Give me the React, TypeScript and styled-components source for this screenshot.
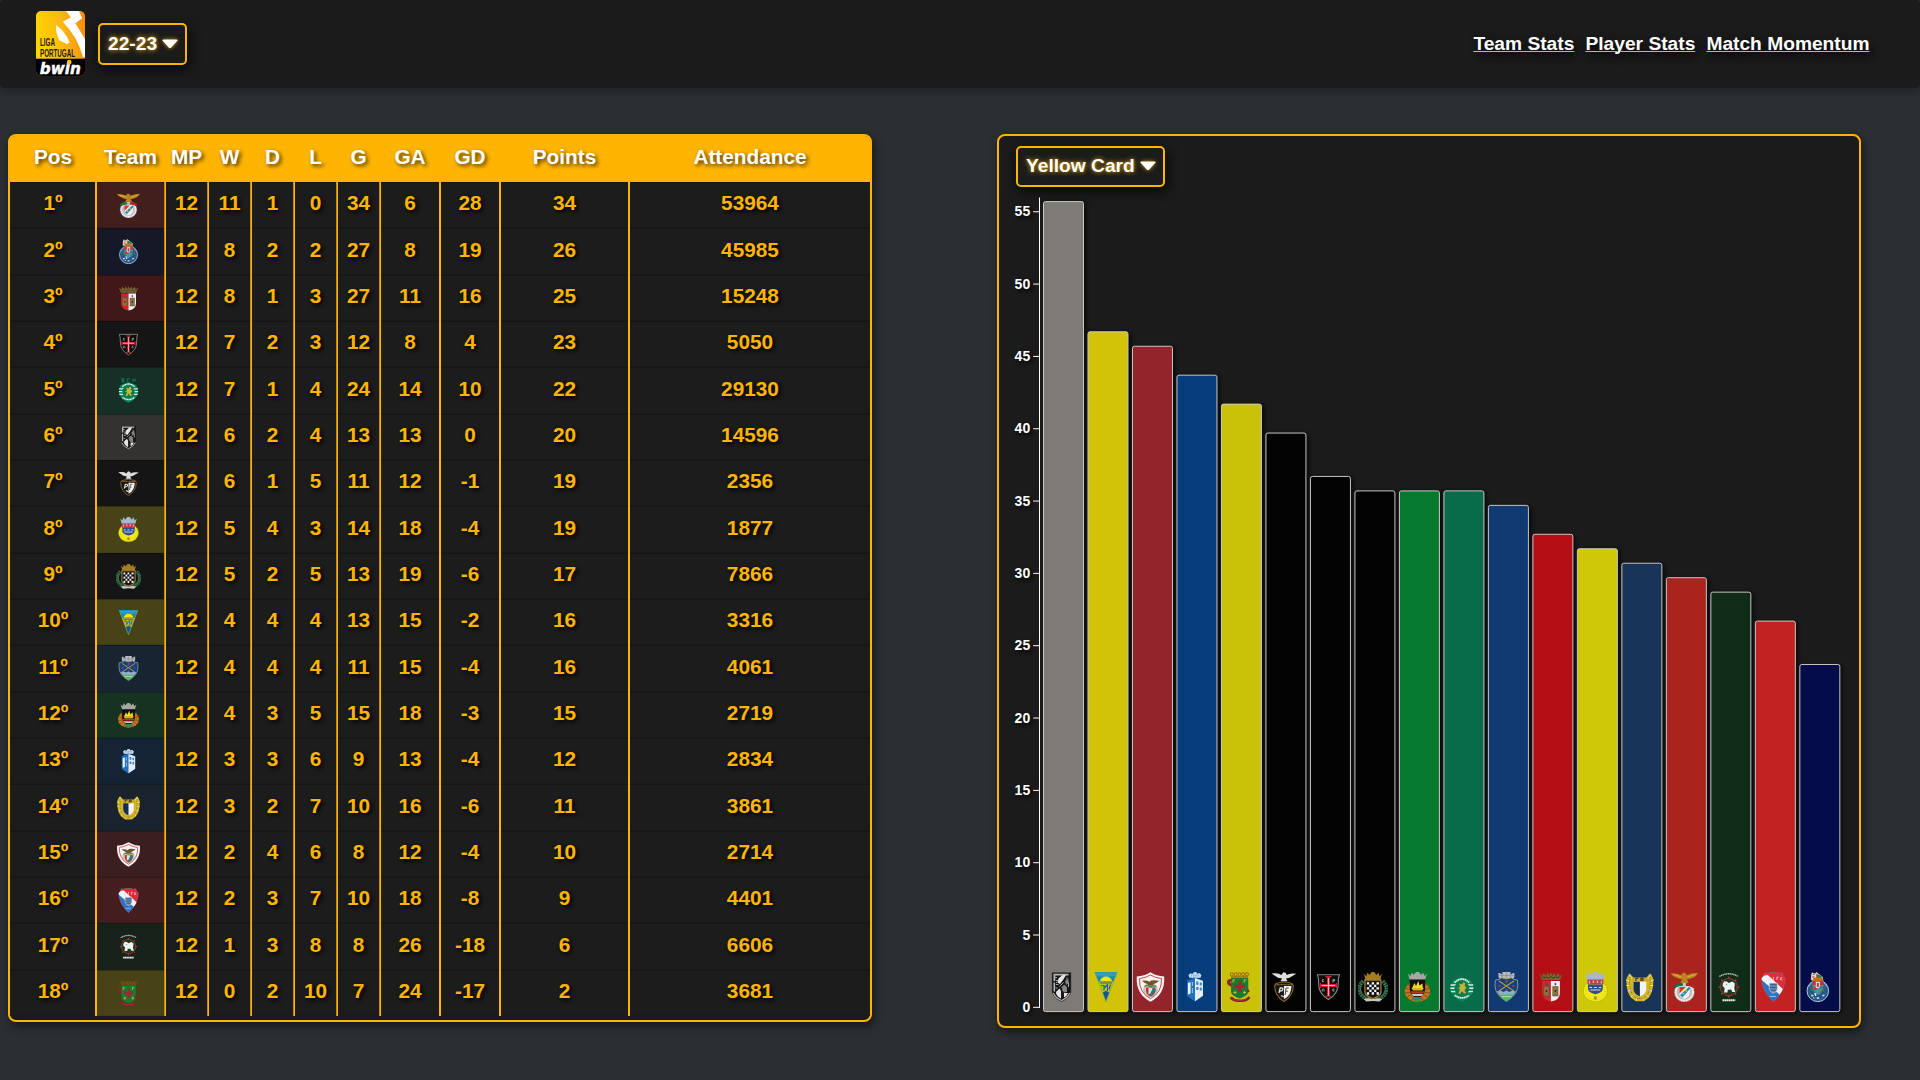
import React from "react";
import styled, { createGlobalStyle } from "styled-components";

const AMBER = "#ffb500";

const GlobalStyle = createGlobalStyle`
  *, *::before, *::after { box-sizing: border-box; }
  html, body { margin: 0; padding: 0; }
  body {
    min-height: 100vh;
    background: #2b2f32;
    font-family: "Liberation Sans", Arial, Helvetica, sans-serif;
    font-weight: 700;
    overflow: hidden;
  }
`;

const Header = styled.header`
  display: flex;
  align-items: center;
  height: 88px;
  padding: 0 50.5px 0 36px;
  background: #1b1b1b;
  border-radius: 4px;
  box-shadow: 0 2px 8px rgba(0, 0, 0, 0.3);
`;

const LogoBox = styled.div`
  width: 49px;
  height: 65px;
  margin: 0 13px 1px 0;
  svg { display: block; overflow: visible; }
`;

const Nav = styled.nav`
  display: flex;
  gap: 11.1px;
  margin-left: auto;
`;

const NavLink = styled.a`
  color: #fff;
  font-size: 19.2px;
  line-height: 22px;
  text-decoration: underline;
  text-decoration-color: ${AMBER};
  text-decoration-thickness: 1px;
  text-shadow: 2px 4px 8px #000;
  cursor: pointer;
`;

const SelectButton = styled.button<{ $height: number }>`
  display: inline-flex;
  align-items: center;
  gap: 5.3px;
  height: ${(p) => p.$height}px;
  padding: 0 7px 1px 8px;
  border: 2px solid ${AMBER};
  border-radius: 5px;
  background: #1b1b1b;
  color: #fff;
  font: 700 19.2px/22px "Liberation Sans", Arial, sans-serif;
  text-shadow: 0 0 5px ${AMBER};
  box-shadow: 2px 4px 12px rgba(0, 0, 0, 0.75);
  white-space: nowrap;
  svg { display: block; overflow: visible; filter: drop-shadow(0 0 2px rgba(255, 181, 0, 0.8)); }
`;

const Main = styled.main`
  display: flex;
  justify-content: space-between;
  align-items: flex-start;
  padding: 46px 59px 0 8px;
`;

const Panel = styled.section<{ $height: number }>`
  width: 864px;
  height: ${(p) => p.$height}px;
  border: 2px solid ${AMBER};
  border-radius: 8px;
  background: #1b1b1b;
  box-shadow: 2px 4px 10px rgba(0, 0, 0, 0.5);
  overflow: hidden;
`;

const Row = styled.div<{ $head?: boolean }>`
  display: grid;
  grid-template-columns: 87px 69px repeat(5, 43px) 60px 60px 129px 240px;
  height: ${(p) => (p.$head ? "46px" : "46.333px")};
  background: ${(p) => (p.$head ? AMBER : "#1c1c1c")};
`;

const Cell = styled.div<{ $tint?: string }>`
  display: flex;
  align-items: center;
  justify-content: center;
  padding-bottom: 3.6px;
  border-right: 2px solid ${AMBER};
  background: ${(p) => p.$tint || "#1c1c1c"};
  color: ${AMBER};
  font-size: 20.8px;
  line-height: 24px;
  text-shadow: 2px 2px 4px #000;
  box-shadow: inset 0 1px 0 rgba(0, 0, 0, 0.25), inset 0 -1px 0 rgba(0, 0, 0, 0.08);
  &:first-child { padding-left: 1px; }
  &:nth-child(n + 2):nth-child(-n + 7) {
    border-right-width: 1px;
    padding-right: 1px;
    box-shadow: inset -1px 0 0 #c08a0a, inset 0 1px 0 rgba(0, 0, 0, 0.25), inset 0 -1px 0 rgba(0, 0, 0, 0.08);
  }
  &:last-child { border-right: 0; }
`;

const HeadCell = styled(Cell)`
  padding-bottom: 4px;
  background: ${AMBER};
  color: #fff;
  text-shadow: 2px 2px 4px rgba(0, 0, 0, 0.75);
  &&, &&:nth-child(n + 2):nth-child(-n + 7) { box-shadow: none; }
`;

const TeamCell = styled(Cell)`
  &&:nth-child(2) { padding: 1px 5px 0 0; }
  svg { display: block; }
`;

const ChartHead = styled.div`
  display: flex;
  padding: 10px 0 0 17px;
  height: 56px;
`;

const ChartSvg = styled.svg`
  display: block;
  overflow: visible;
`;

const AxisLabel = styled.text`
  fill: #fff;
  font: 700 14px "Liberation Sans", Arial, sans-serif;
  text-anchor: end;
  text-shadow: 2px 2px 4px #000;
`;

const Bar = styled.rect`
  stroke: #c8c8c8;
  stroke-width: 1px;
  filter: drop-shadow(2px 1px 2px rgba(0, 0, 0, 0.7));
`;

/* ---------- crests, each drawn on a 30 x 30 grid ---------- */

const crown = (color: string, x: number, y: number, w: number, h: number) => (
  <path
    d={`M${x} ${y + h * 0.2} l${w * 0.13} ${h * 0.3} l${w * 0.07} ${-h * 0.45} l${w * 0.1} ${h * 0.3} l${w * 0.13} ${-h * 0.35} h${w * 0.14} l${w * 0.13} ${h * 0.35} l${w * 0.1} ${-h * 0.3} l${w * 0.07} ${h * 0.45} l${w * 0.13} ${-h * 0.3} l${-w * 0.1} ${h * 0.8} h${-w * 0.8} z`}
    fill={color}
  />
);

const crests: Record<string, React.ReactNode> = {
  benfica: (
    <>
      <circle cx="15" cy="20" r="10" fill="#bdbab8" stroke="#8d8a88" strokeWidth=".5" />
      <circle cx="15" cy="20" r="8.6" fill="none" stroke="#efefef" strokeWidth="2" strokeDasharray="2 .5" />
      <path d="M4.5 13.6 Q9 9.5 14 11.5 L13 14 Q9.5 13.6 6 16Z" fill="#1e6b41" />
      <path d="M25.5 13.6 Q21 9.5 16 11.5 L17 14 Q20.5 13.6 24 16Z" fill="#b32020" />
      <path d="M9.6 14.5 H20.6 V20 Q20 25.5 15.1 27 Q10.2 25.5 9.6 20Z" fill="#f1eeea" />
      <path d="M10 15 H16.5 L10 21.5Z" fill="#d5372b" />
      <path d="M20 14.5 l1 2 L13 25.4 l-2.3-2.4Z" fill="#1c8fc0" />
      <path d="M15.6 17.6 l2 1.8 M13 21 l1.5 1.3" stroke="#e5be2e" strokeWidth="1.3" />
      <path d="M1 1.2 Q7 .8 12 3 L14 .5 L16.5 1.6 L17.2 3.2 Q23 .6 29 1.2 Q26 5.2 21.5 6.6 L17.5 7.4 L18.9 9.6 L14.8 11.4 L11.5 9.5 L12.7 7.4 Q5 6.2 1 1.2Z" fill="#bb8420" />
      <path d="M4 2.5 L12 5 M26 2.5 L18 5" stroke="#edb846" strokeWidth=".8" />
    </>
  ),
  porto: (
    <>
      <circle cx="15" cy="18.8" r="10.8" fill="#245589" stroke="#b9c6d4" strokeWidth="1" />
      <circle cx="15" cy="18.8" r="8" fill="none" stroke="#416d9d" strokeWidth=".7" />
      <path d="M5.5 15 l3-4 M24.5 15 l-3-4" stroke="#7fa4c5" strokeWidth="1.2" />
      <path d="M9.5 8 h11 v9 q0 4-5.5 6 q-5.5-2-5.5-6z" fill="#568bb1" />
      <path d="M9.7 9 h3.3 v4 h-3.3z M17 9 h3.3 v4 H17z M11 15 h3 v3 h-3z" fill="#cc2f37" />
      <path d="M13 10 h4 v6 h-4z" fill="#e9ded9" />
      <path d="M14 11 h2 v4 h-2z" fill="#bb3740" />
      <path d="M16.5 15.5 h4 v2.5 l-3 3 M9.5 14v4 l3 3" fill="none" stroke="#37784a" strokeWidth="1.7" />
      <path d="M8 7.5 Q8 3 9 .6 L12.5 1.6 L13.5 0 L16 2 L20 5 V8.2 H9Z" fill="#e2d8c9" />
      <path d="M10 6.4 L14 5 L20.5 6.8 V9 H11Z" fill="#b97124" />
      <path d="M13.5 1.8 l5 2.2 1 2-6-.5z" fill="#3a7143" />
      <path d="M10 2.3 h2 M9.2 5h2.3" stroke="#bd2c34" />
      <path d="M8.4 23.5 h2.2 M10.5 25.8 h1 M14 26 h2.2 M19.5 23.5 h2 M12 21l1 3" stroke="#e1e8f0" strokeWidth="1.3" />
    </>
  ),
  braga: (
    <>
      <path d="M3.5 2 l3 2 1-3 3 3 1.2-4 1.8 4 L15 0l1.5 4 L18.3.5l1.5 3.5 2.8-3 1 3 3-2-2.5 6 H6z" fill="#756633" />
      <path d="M5 3.5 l3 2.4 2-1 2.5 1.2 2.5-1.5 2.5 1.5 2-1.2 2.5 1L25 3.5" stroke="#3c311f" fill="none" strokeWidth=".8" />
      <path d="M6.2 9 H15.2 V29.5 Q6.2 28 6.2 21Z" fill="#d1262c" />
      <path d="M15 9 h9 v12 q0 7-9 8.5z" fill="#efefef" />
      <path d="M7.8 14.5 h5.4 v9.5 H7.8z M16.8 14.5 h5.4 v9.5 h-5.4z" fill="#8a733e" stroke="#574b2c" strokeWidth=".5" />
      <path d="M9.8 18h1.5v2H9.8z M18.8 18h1.5v2h-1.5z" fill="#362e20" />
      <path d="M9.3 12 l1.3-1.2 1.3 1.2-1.3 1.5z M18.2 12l1.3-1.2 1.3 1.2-1.3 1.5z" fill="#3947a3" />
    </>
  ),
  casapia: (
    <>
      <path d="M4 2.8 H26 Q24.5 6.5 24.8 12 Q25 21.5 15 27.5 Q5 21.5 5.2 12 Q5.5 6.5 4 2.8Z" fill="#0b0b0b" stroke="#868686" strokeWidth="1.1" />
      <path d="M13.6 5 h2.8 v7 h6.3 v2.9 h-6.3 v9.3 h-2.8 v-9.3 H7.3 V12 h6.3z" fill="#d9202f" />
      <path d="M15 6 V24 M8.5 13.5 H21.5" stroke="#efc9c8" strokeWidth=".9" />
      <path d="M12 4.6h6 M12 24.3h6 M7 11v5 M23 11v5" stroke="#d9202f" strokeWidth="1.1" />
      <path d="M10.6 7.7 h-1.6 v2 h1.6 M19.5 10.5V7.5h1.7v1.4h-1.5 M8.8 19.5v-2l.9-.8.9.8v2 M21 17h-1.6v2H21" stroke="#bdbdbd" fill="none" strokeWidth=".8" />
    </>
  ),
  sporting: (
    <>
      <path d="M10 1 H7 V2.8 H9.6 V4.6 H6.8 M16.5 1 h-3 v3.6 h3 M20.3 5 V1.2 h2.8 v2 h-2.6" stroke="#08714d" strokeWidth="1.3" fill="none" />
      <path d="M4.2 12 Q5 7 10 6.8 L15 5.4 L20 6.8 Q25 7 25.8 12 L26.2 19 Q23.5 27 15 30 Q6.5 27 3.8 19Z" fill="#098255" />
      <path d="M3.6 13 H26.4 M3.4 16.3 H26.6 M4 19.6 H26" stroke="#d9efe4" strokeWidth="1.5" />
      <circle cx="15" cy="16.5" r="7.4" fill="#0a7950" />
      <path d="M7.6 10.6 Q15 3.6 22.4 10.6" fill="none" stroke="#d9efe4" strokeWidth="1.7" strokeDasharray="1.6 .3" />
      <path d="M7.8 23.2 Q15 28.6 22.2 23.2" fill="none" stroke="#d9efe4" strokeWidth="1.7" strokeDasharray="1.6 .3" />
      <path d="M12 11.5 l3 1 1.3-2 2.1.6-.7 2.8 1.8 1.7-2 3 2 2.4-2.4.5-2-2.5-2 3-1.7-.5 2-5-2.7.4 2.6-2.5z" fill="#c6b33a" />
    </>
  ),
  guimaraes: (
    <>
      <path d="M5.5 .5 H24.5 V20 Q23 26 15 29.7 Q7 26 5.5 20Z" fill="#171717" stroke="#4a4a4a" strokeWidth=".5" />
      <path d="M7 1.8 h15 v1.6 H8.8 V9 H7z M7 10.5 h1.6 v9 H7z" fill="#b5b5b5" />
      <path d="M12 6.5 L16 3 H19.5 L16.5 8 L13.5 12 L11 10.5Z" fill="#e6e6e6" />
      <path d="M10 19.5 L13 16.5 L14.5 19 V26.6 Q9.6 24 9.4 20z M17.5 21 h4 q-1 3-4 4.6z" fill="#e4e4e4" />
      <path d="M8 5.5h2.5 M9.5 8.5h2 M9.5 12.5h2.5 M9 16h2 M20.5 5.5v3 M22 10v5 M13 14.5l4-4 M15 16l3-3 M9.5 10.5h1" stroke="#a5a5a5" strokeWidth="1" />
      <path d="M18.5 9 L22 7 V11 L19.5 13Z M16 14.5l2.5-1.5 2 2.5v4.5l-3 .5-2-2.5z" fill="#858585" />
      <path d="M6.8 21 Q9 26 15 28.5 Q21 26 23.2 21" fill="none" stroke="#b8b8b8" strokeWidth="1.1" />
    </>
  ),
  portimonense: (
    <>
      <path d="M7 11.5 Q15 8.5 23 11.5 L24.4 14 Q24 24 15 29.5 Q6 24 5.6 14Z" fill="#191713" stroke="#8b662b" strokeWidth="1.1" />
      <path d="M6.5 12.6h17" stroke="#8b672d" strokeWidth="1.4" strokeDasharray="1 .4" />
      <path d="M15 14 h7.5 q0 9.5-7.5 13.3z" fill="#f2f2f2" />
      <path d="M10 21 l1.2-5 q3-.6 2.6 1.6 q-.4 1.8-3 1.6 M12 23.5 l3 1.5" fill="none" stroke="#e6e6e6" strokeWidth="1.3" />
      <path d="M19.6 16h-2.4l-1 6.8 M16.8 19.2h2" fill="none" stroke="#191919" strokeWidth=".8" />
      <path d="M2.6 1.6 Q10 .6 12.3 3 L14.5 .2 L17 1.1 L17.7 3 Q21 .6 27.4 1.8 L20 6 L17 6.5 L18.6 9.2 H11.5 L13.2 6.5 L9 5.8Z" fill="#dedede" />
    </>
  ),
  arouca: (
    <>
      <ellipse cx="15" cy="19" rx="12" ry="10.7" fill="#f3e813" stroke="#a9a52a" strokeWidth=".8" strokeDasharray="1.4 .9" />
      <ellipse cx="15" cy="19" rx="9.4" ry="8.8" fill="none" stroke="#b9bc20" strokeWidth=".9" strokeDasharray=".7 1.6" />
      {crown("#a5b8d2", 5, 0, 20, 8.4)}
      <path d="M7 7.6 h16 v5 H7z" fill="#b9404e" />
      <path d="M7.6 12.4 h14.8 v4.4 q0 4-7.4 5.4 q-7.4-1.4-7.4-5.4z" fill="#2d4d97" />
      <path d="M9 9 v2.4 M13 8.5v2.4 M17 8.5v2.4 M21 9v2.4" stroke="#e8b9a2" strokeWidth="1.2" />
      <path d="M9 15.5 h2.6 M13.6 15.5h2.8 M18.4 15.5h2.6 M10 18h10" stroke="#d3dbe6" strokeWidth="1.1" />
      <path d="M13.6 24.5 h2.8 v3 h-2.8z" fill="#a09320" />
    </>
  ),
  boavista: (
    <>
      <path d="M5.2 9 Q-1.5 16 3.5 23 Q7 27 12 27.5 M24.8 9 Q31.5 16 26.5 23 Q23 27 18 27.5" fill="none" stroke="#2f6a49" strokeWidth="4" strokeDasharray="2 .5" />
      <path d="M3.4 12 Q.5 20 7.5 25 M26.6 12 Q29.5 20 22.5 25" fill="none" stroke="#86ad8e" strokeWidth=".8" strokeDasharray="1 1.3" />
      {crown("#a57c24", 6, 0, 18, 8.6)}
      <path d="M7 8 H23 V20.5 Q22 24.5 15 26.5 Q8 24.5 7 20.5Z" fill="#171717" stroke="#a37d2a" strokeWidth="1.3" />
      {[0, 1, 2, 3, 4].map((r) =>
        [0, 1, 2, 3, 4].map((c) => (
          <rect key={`${r}-${c}`} x={9 + c * 2.4} y={10.2 + r * 2.5} width="2.4" height="2.5" fill={(r + c) % 2 ? "#101010" : "#f8f8f8"} />
        ))
      )}
      <path d="M5.5 27 Q10 25.5 15 27 Q20 25.5 24.5 27 L21.5 29.6 Q15 28.3 8.5 29.6Z" fill="#c3c6c7" />
    </>
  ),
  estoril: (
    <>
      <path d="M3.6 .2 H26.4 L15 30Z" fill="#118cae" />
      <path d="M3.8 .4 H26.2 L24.8 4 H5.2Z" fill="#2a93bd" />
      <path d="M6 2h18 M7 4h16" stroke="#7fc0bd" strokeWidth=".7" strokeDasharray=".8 .8" />
      <path d="M9 9 Q10.5 4.4 15 4.4 Q19.5 4.4 21 9Z" fill="#f7e313" />
      <path d="M7.2 9.5 H22.8 L18.6 20.5 H11.4Z" fill="#c5bf21" />
      <path d="M9 11h12 M10 13.5h3v5 M12.5 17l3.5-4 M16.5 12v7 M19.5 12.5l-1.5 5" fill="none" stroke="#1c679d" strokeWidth="1.2" />
      <path d="M11.9 20.4 L15 18.8 L18.1 20.4 L15 29Z" fill="#165398" />
      <path d="M3.9.5 15 29.6 26.1.5" fill="none" stroke="#86b24f" strokeWidth=".7" />
    </>
  ),
  chaves: (
    <>
      <path d="M7 1 h2 v1 h2 V0 h8 v2 h2 V1 h2 v4 l-2 3 H9L7 5z" fill="#b6b8bb" />
      <path d="M8 3.5h14 M11 1.2v4 M15 1v5 M19 1.2v4" stroke="#868a90" strokeWidth=".7" />
      <path d="M4 8 Q8 8 10 5.8 Q15 8 20 5.8 Q22 8 26 8 Q28 19 21 25 L15 29.5 L9 25 Q2 19 4 8Z" fill="#173f83" stroke="#93a47b" strokeWidth=".9" />
      <path d="M7.5 9 L22.5 19 M22.5 9 L7.5 19" stroke="#b39a37" strokeWidth="1.2" />
      <path d="M14 8 h2.4 v3 H14z M7 13h2v2H7z M21 13h2v2h-2z M14 17h2v1.5h-2z" fill="#8a3c70" />
      <path d="M5.5 19.6 l3.5-1 3 1.3 3-1.3 3 1.3 3-1.3 3.5 1-2.5 3.6H8z" fill="#93aeca" />
      <path d="M7.5 22.5 h15 l-3 4-4.5 3-4.5-3z" fill="#5bb26c" />
      <path d="M10 24.6h10" stroke="#c4dcae" strokeWidth=".9" />
    </>
  ),
  rioave: (
    <>
      <ellipse cx="15" cy="19.5" rx="12.6" ry="10.2" fill="#c8731b" />
      <path d="M5 12 l4 2.5 M2.6 16l5 1.5 M2.5 21l5-.6 M4.5 25.5l4-3 M9 28.5l2-3 M25 12l-4 2.5 M27.4 16l-5 1.5 M27.5 21l-5-.6 M25.5 25.5l-4-3 M21 28.5l-2-3" stroke="#7a4513" strokeWidth=".8" />
      {crown("#a5a7a5", 5.5, 0, 19, 8)}
      <path d="M7.3 7.4 H22.7 V17 Q22 25 15 26 Q8 25 7.3 17Z" fill="#120f0c" />
      <path d="M9.5 16.5 L12 11 L13.6 14 L16 9 L17 13.6 L20 11.5 L20.5 16.5Z" fill="#f0dc22" />
      <path d="M9 16 H21.5 L20 18.6H10.5Z" fill="#d8b220" />
      <path d="M8 19.3 h14 l-1 1.8H9z" fill="#b8372c" />
      <path d="M8.8 21.8 h12.4 l-2 2.2 H11z" fill="#c5d3bb" />
      <path d="M9.5 25.5 Q15 24 20.5 25.5 L18.5 28.8 H11.5z" fill="#3a8455" />
    </>
  ),
  vizela: (
    <>
      <path d="M8.5 3 l2-1.7 2 .8 1.3-1.8 2.4-.2 1 1.7 2-.8 2.3 2-1.2 3H9.5z" fill="#c7dcf0" />
      <path d="M9.5 5.2 h11 M11 3.2h8" stroke="#3673b1" strokeWidth=".7" strokeDasharray="1 .8" />
      <path d="M7 8.5 L15 5.5 L23 8.5 V24 L15 29.5 L7 24Z" fill="#2270bb" />
      <path d="M15 6 L23 9 V23.8 L15 29.2Z" fill="#e6edf4" />
      <path d="M16.2 9.3 l2.3.5 v3.2 l-2.3-.2z M19.8 10.3 l2 .5v2.8l-2-.2z M16.2 15h2.3v3h-2.3z M19.8 15.5h2v3h-2z" fill="#3d86c9" />
      <path d="M8 11 L10.6 10 V21.5 L8 22.5Z" fill="#eaf2fa" />
      <path d="M12.4 10v4 M12.4 16v5" stroke="#a9cbe9" strokeWidth="1" />
    </>
  ),
  famalicao: (
    <>
      <path d="M5 1.5 Q.8 5 1.6 11 Q2 21 6.5 26 L11 29.3 H19 L23.5 26 Q28 21 28.4 11 Q29.2 5 25 1.5 L21 6 H9Z" fill="#d2b41f" />
      <path d="M4 2.6 l3 4 M1.2 8 l3.6 1.4 M1.6 13.5 l3.6 .2 M3 19 l3.4-1 M6 25 l3-2.6 M11 28.5l1.4-2.4 M26 2.6l-3 4 M28.8 8l-3.6 1.4 M28.4 13.5l-3.6 .2 M27 19l-3.4-1 M24 25l-3-2.6 M19 28.5l-1.4-2.4" stroke="#e9e3c4" strokeWidth="1" />
      <path d="M5.2 5 Q3.6 14 7.4 22.5 L11.6 26.5 H18.4 L22.6 22.5 Q26.4 14 24.8 5" fill="none" stroke="#6d6425" strokeWidth=".9" strokeDasharray="1.1 1.1" />
      <path d="M7.6 5.4 H22.4 V9.6 H7.6z" fill="#c9ab22" />
      <path d="M11 9 V6.2h2.5 M16 9V6.2h2.2v2h-2" fill="none" stroke="#2d2d20" strokeWidth="1" />
      <path d="M8.6 9.8 h12.8 v8 q-1 5-6.4 6.6 q-5.4-1.6-6.4-6.6z" fill="#f3f3f3" />
      <path d="M8.6 9.8 H15 V24.4 Q9.6 22.8 8.6 17.8Z" fill="#152c52" />
    </>
  ),
  santaclara: (
    <>
      <path d="M15 .3 Q9 4 1.3 4.5 Q0 22 15 29.7 Q30 22 28.7 4.5 Q21 4 15 .3Z" fill="#f7f3f3" />
      <path d="M15 3 Q10 6 4 6.5 Q3.3 20.5 15 26.7 Q26.7 20.5 26 6.5 Q20 6 15 3Z" fill="none" stroke="#c6474f" strokeWidth="1" />
      <circle cx="15" cy="18" r="6.8" fill="#d4d0c9" stroke="#8c8880" strokeWidth=".6" />
      <path d="M10.5 15.5 h9.5 v4 q-1 4-4.8 5-3.8-1-4.7-5z" fill="#bf3439" />
      <path d="M13 16 h4 v6h-4z" fill="#e7e2dc" />
      <path d="M18 15l2.5 3-4.5 6-2-1z" fill="#277b78" />
      <path d="M6.5 8.8 Q11 8 14 9.8 L15.5 8.4 Q20 7.8 23.5 8.8 Q21 11.6 17.5 12.2 L18.6 13.8 H11.4 L12.6 12.2 Q9 11.6 6.5 8.8Z" fill="#6f5424" />
      <path d="M9 14.5 Q12 12.5 15 15 M15 15q3-2 6-.5" fill="none" stroke="#438045" strokeWidth="1.2" />
    </>
  ),
  gilvicente: (
    <>
      <path d="M6.5 .8 Q9 2 11.5 .6 H18.5 Q21 2 23.5 .8 Q24.5 4 26.8 6 Q26.6 19 15 29.8 Q3.4 19 3.2 6 Q5.5 4 6.5 .8Z" fill="#e02c37" stroke="#8c6f9e" strokeWidth=".6" />
      <path d="M3.4 6 L5.5 4 L21.5 22.4 Q18.5 26.8 15 29.6 Q3.6 19 3.4 6Z" fill="#2a74c8" />
      <path d="M3.4 8 V6 L6 3.4 L9.5 3 L24.6 17 Q23.3 20 21.3 22.5 L17 19 L8 12Z" fill="#f0f3f7" />
      <path d="M11 11 h8 v6.4 q-1 3-4 4-3-1-4-4z" fill="#6f8caf" stroke="#dde5ee" strokeWidth=".5" />
      <path d="M11.6 12.8h6.8 M11.6 15.6h6.8 M12.4 18.2h5.2" stroke="#2c4c78" strokeWidth=".9" />
      <path d="M12 5.5h-1.6v2.6H12V7 M15 5v3 M18.5 8V5.2h1.8 M24 5.8h-1.7v2H24" fill="none" stroke="#f3d9dd" strokeWidth=".8" />
      <path d="M11.5 24.4h6" stroke="#a3c3ea" strokeWidth="1" />
    </>
  ),
  maritimo: (
    <>
      <path d="M5.5 4.5 Q15 -1 24.5 4.5" fill="none" stroke="#b5c6ba" strokeWidth="1.5" strokeDasharray="1.3 .5" />
      <circle cx="15" cy="15" r="8.6" fill="#173a23" stroke="#8f2d2d" strokeWidth="1.2" />
      <path d="M15 4.6v2 M15 23.4v2 M4.6 15h2 M23.4 15h2 M7.6 7.6l1.5 1.5 M22.4 7.6L20.9 9.1 M7.6 22.4L9.1 20.9 M22.4 22.4L20.9 20.9" stroke="#a93434" strokeWidth="1.5" />
      <path d="M9 11.5 L10.5 9.2 L13 9.6 L15 11 L18.5 9.5 L21 11.5 L20.4 16.6 L21.4 20 H18.4 L17.3 17.6 L14 17.8 L13.6 20.4 H10.2 L10.8 16 L8.7 14Z" fill="#eef1ed" />
      <path d="M12 12.2l1.4 .8" stroke="#567360" strokeWidth=".8" />
      <path d="M8.6 28.3 h12.8" stroke="#e8eee8" strokeWidth="2" strokeDasharray="1.7 .3" />
    </>
  ),
  pacos: (
    <>
      {[7.4, 11.2, 15, 18.8, 22.6].map((x) => (
        <circle key={x} cx={x} cy="2.3" r="1.6" fill="none" stroke="#a0541d" strokeWidth=".9" />
      ))}
      <path d="M6.5 5 h17" stroke="#9b3c1c" strokeWidth="1.2" />
      <path d="M7 8.5 Q3 8 4.4 11.5 L8 14" fill="none" stroke="#9a1d24" strokeWidth="3" />
      <path d="M6 25.5 Q10 29.3 16 28.8 Q22 29 25 25" fill="none" stroke="#8e1d24" strokeWidth="2.6" />
      <path d="M6.6 6 H23.8 V20 Q23 24.4 15.2 26.4 Q7.4 24.4 6.6 20Z" fill="#177a35" />
      <path d="M23 17.5 L24.6 20" stroke="#8e1d24" strokeWidth="1.6" />
      <path d="M13.2 9.4 h4 l-.9 4 4-.9 v4.2 l-4-.9 .9 4.2 h-4 l.8-4.2-4 .9v-4.2l4 .9z" fill="#a9222c" />
      <path d="M8.6 10.6v-2.6h2 M22 8h-2.2v2.6 M9 20.5h3 M18.6 20.5h3 M10.5 22v-3 M20 22v-3" fill="none" stroke="#d4b228" strokeWidth="1.1" />
      <path d="M8.5 27.6 Q15 29.4 22 27.2" fill="none" stroke="#c47a70" strokeWidth=".6" strokeDasharray="1 .7" />
    </>
  ),
};

const Crest = ({ team, size, x, y }: { team: string; size: number; x?: number; y?: number }) => (
  <svg x={x} y={y} width={size} height={size} viewBox="0 0 30 30">
    {crests[team]}
  </svg>
);

const LeagueLogo = () => (
  <svg width="49" height="65" viewBox="0 0 49 65">
    <defs>
      <linearGradient id="gold" x1="0" y1="0.3" x2="1" y2="0.1">
        <stop offset="0" stopColor="#ffd400" />
        <stop offset="0.5" stopColor="#fdb913" />
        <stop offset="1" stopColor="#f58a0c" />
      </linearGradient>
      <clipPath id="round"><rect width="49" height="65" rx="5" /></clipPath>
    </defs>
    <g clipPath="url(#round)">
      <rect width="49" height="65" fill="url(#gold)" />
      <path d="M30 0 H43 L46.2 7.3 L39.3 12.2 L49 28 V46 L47 46 Q41 25 26.7 10.8 L34.8 6.2Z" fill="#fff" />
      <path d="M20 14 Q29 20 33.7 31.6 L31 33 L23.2 29.3 Q19.7 22 20 14Z" fill="#fff" />
      <rect y="47.7" width="49" height="18" fill="#000" />
    </g>
    <text x="4" y="35.2" fontFamily="'Liberation Sans', sans-serif" fontWeight="700" fontSize="10.4" textLength="15" lengthAdjust="spacingAndGlyphs" fill="#1d1a0c">LIGA</text>
    <text x="4" y="46" fontFamily="'Liberation Sans', sans-serif" fontWeight="700" fontSize="10.4" textLength="35" lengthAdjust="spacingAndGlyphs" fill="#1d1a0c">PORTUGAL</text>
    <text x="3.8" y="62.7" fontFamily="'DejaVu Sans', sans-serif" fontWeight="700" fontStyle="italic" fontSize="16.4" textLength="41" lengthAdjust="spacingAndGlyphs" fill="#fff" stroke="#fff" strokeWidth=".5">bwin</text>
    <circle cx="33.3" cy="51" r="2.3" fill="#ffc400" />
  </svg>
);

const Caret = () => (
  <svg width="16" height="10" viewBox="0 0 16 10">
    <path d="M1.5 .5 H14.5 Q16.2 .7 15.2 2.1 L9 8.7 Q8 9.6 7 8.7 L.8 2.1 Q-.2 .7 1.5 .5Z" fill="#fff" />
  </svg>
);

/* ---------- data ---------- */

const columns = ["Pos", "Team", "MP", "W", "D", "L", "G", "GA", "GD", "Points", "Attendance"];

type Standing = { team: string; tint: string; stats: number[] };

const standings: Standing[] = [
  { team: "benfica", tint: "#401f1d", stats: [12, 11, 1, 0, 34, 6, 28, 34, 53964] },
  { team: "porto", tint: "#151827", stats: [12, 8, 2, 2, 27, 8, 19, 26, 45985] },
  { team: "braga", tint: "#401819", stats: [12, 8, 1, 3, 27, 11, 16, 25, 15248] },
  { team: "casapia", tint: "#151515", stats: [12, 7, 2, 3, 12, 8, 4, 23, 5050] },
  { team: "sporting", tint: "#162f27", stats: [12, 7, 1, 4, 24, 14, 10, 22, 29130] },
  { team: "guimaraes", tint: "#333231", stats: [12, 6, 2, 4, 13, 13, 0, 20, 14596] },
  { team: "portimonense", tint: "#151515", stats: [12, 6, 1, 5, 11, 12, -1, 19, 2356] },
  { team: "arouca", tint: "#474317", stats: [12, 5, 4, 3, 14, 18, -4, 19, 1877] },
  { team: "boavista", tint: "#151515", stats: [12, 5, 2, 5, 13, 19, -6, 17, 7866] },
  { team: "estoril", tint: "#474317", stats: [12, 4, 4, 4, 13, 15, -2, 16, 3316] },
  { team: "chaves", tint: "#182432", stats: [12, 4, 4, 4, 11, 15, -4, 16, 4061] },
  { team: "rioave", tint: "#163221", stats: [12, 4, 3, 5, 15, 18, -3, 15, 2719] },
  { team: "vizela", tint: "#152434", stats: [12, 3, 3, 6, 9, 13, -4, 12, 2834] },
  { team: "famalicao", tint: "#1a232d", stats: [12, 3, 2, 7, 10, 16, -6, 11, 3861] },
  { team: "santaclara", tint: "#3b1f20", stats: [12, 2, 4, 6, 8, 12, -4, 10, 2714] },
  { team: "gilvicente", tint: "#441e1f", stats: [12, 2, 3, 7, 10, 18, -8, 9, 4401] },
  { team: "maritimo", tint: "#18221a", stats: [12, 1, 3, 8, 8, 26, -18, 6, 6606] },
  { team: "pacos", tint: "#474317", stats: [12, 0, 2, 10, 7, 24, -17, 2, 3681] },
];

const cards: { team: string; value: number; color: string }[] = [
  { team: "guimaraes", value: 56, color: "#7e7a75" },
  { team: "estoril", value: 47, color: "#d2c308" },
  { team: "santaclara", value: 46, color: "#94242b" },
  { team: "vizela", value: 44, color: "#053c7c" },
  { team: "pacos", value: 42, color: "#cac208" },
  { team: "portimonense", value: 40, color: "#030303" },
  { team: "casapia", value: 37, color: "#030303" },
  { team: "boavista", value: 36, color: "#030303" },
  { team: "rioave", value: 36, color: "#057a2f" },
  { team: "sporting", value: 36, color: "#086c4a" },
  { team: "chaves", value: 35, color: "#113a73" },
  { team: "braga", value: 33, color: "#b40f15" },
  { team: "arouca", value: 32, color: "#cfc807" },
  { team: "famalicao", value: 31, color: "#183457" },
  { team: "benfica", value: 30, color: "#a8241c" },
  { team: "maritimo", value: 29, color: "#102b17" },
  { team: "gilvicente", value: 27, color: "#c22321" },
  { team: "porto", value: 24, color: "#040c4a" },
];

/* chart geometry, relative to the top left corner of the plot */
const UNIT = 14.465;
const AXIS_X = 40.5;
const AXIS_TOP = 5.5;
const ZERO_Y = AXIS_TOP + 56 * UNIT;
const PITCH = 44.49;
const ticks = Array.from({ length: 12 }, (_, i) => i * 5);

const YellowCardChart = () => (
  <ChartSvg width="860" height="834">
    {cards.map((c, i) => {
      const x = 44.5 + i * PITCH;
      const height = c.value * UNIT;
      return (
        <g key={c.team}>
          <Bar x={x} y={ZERO_Y + 4.1 - height} width={40} height={height} rx="2" fill={c.color} />
          <Crest team={c.team} size={30} x={x + 3} y={780} />
        </g>
      );
    })}
    <line x1={AXIS_X} x2={AXIS_X} y1={AXIS_TOP} y2={ZERO_Y + 0.5} stroke="#fff" />
    {ticks.map((t) => {
      const y = ZERO_Y - t * UNIT;
      return (
        <g key={t}>
          <line x1={AXIS_X - 6.5} x2={AXIS_X} y1={y - 0.2} y2={y - 0.2} stroke="#fff" />
          <AxisLabel x={AXIS_X - 9.3} y={y + 4.4}>{t}</AxisLabel>
        </g>
      );
    })}
  </ChartSvg>
);

export default function App() {
  return (
    <>
      <GlobalStyle />
      <Header>
        <LogoBox><LeagueLogo /></LogoBox>
        <SelectButton $height={42}>22-23<Caret /></SelectButton>
        <Nav>
          <NavLink>Team Stats</NavLink>
          <NavLink>Player Stats</NavLink>
          <NavLink>Match Momentum</NavLink>
        </Nav>
      </Header>
      <Main>
        <Panel $height={888}>
          <Row $head>
            {columns.map((c) => <HeadCell key={c}>{c}</HeadCell>)}
          </Row>
          {standings.map((s, i) => (
            <Row key={s.team}>
              <Cell>{i + 1}º</Cell>
              <TeamCell $tint={s.tint}><Crest team={s.team} size={25} /></TeamCell>
              {s.stats.map((v, j) => <Cell key={j}>{v}</Cell>)}
            </Row>
          ))}
        </Panel>
        <Panel $height={894}>
          <ChartHead>
            <SelectButton $height={41}>Yellow Card<Caret /></SelectButton>
          </ChartHead>
          <YellowCardChart />
        </Panel>
      </Main>
    </>
  );
}
